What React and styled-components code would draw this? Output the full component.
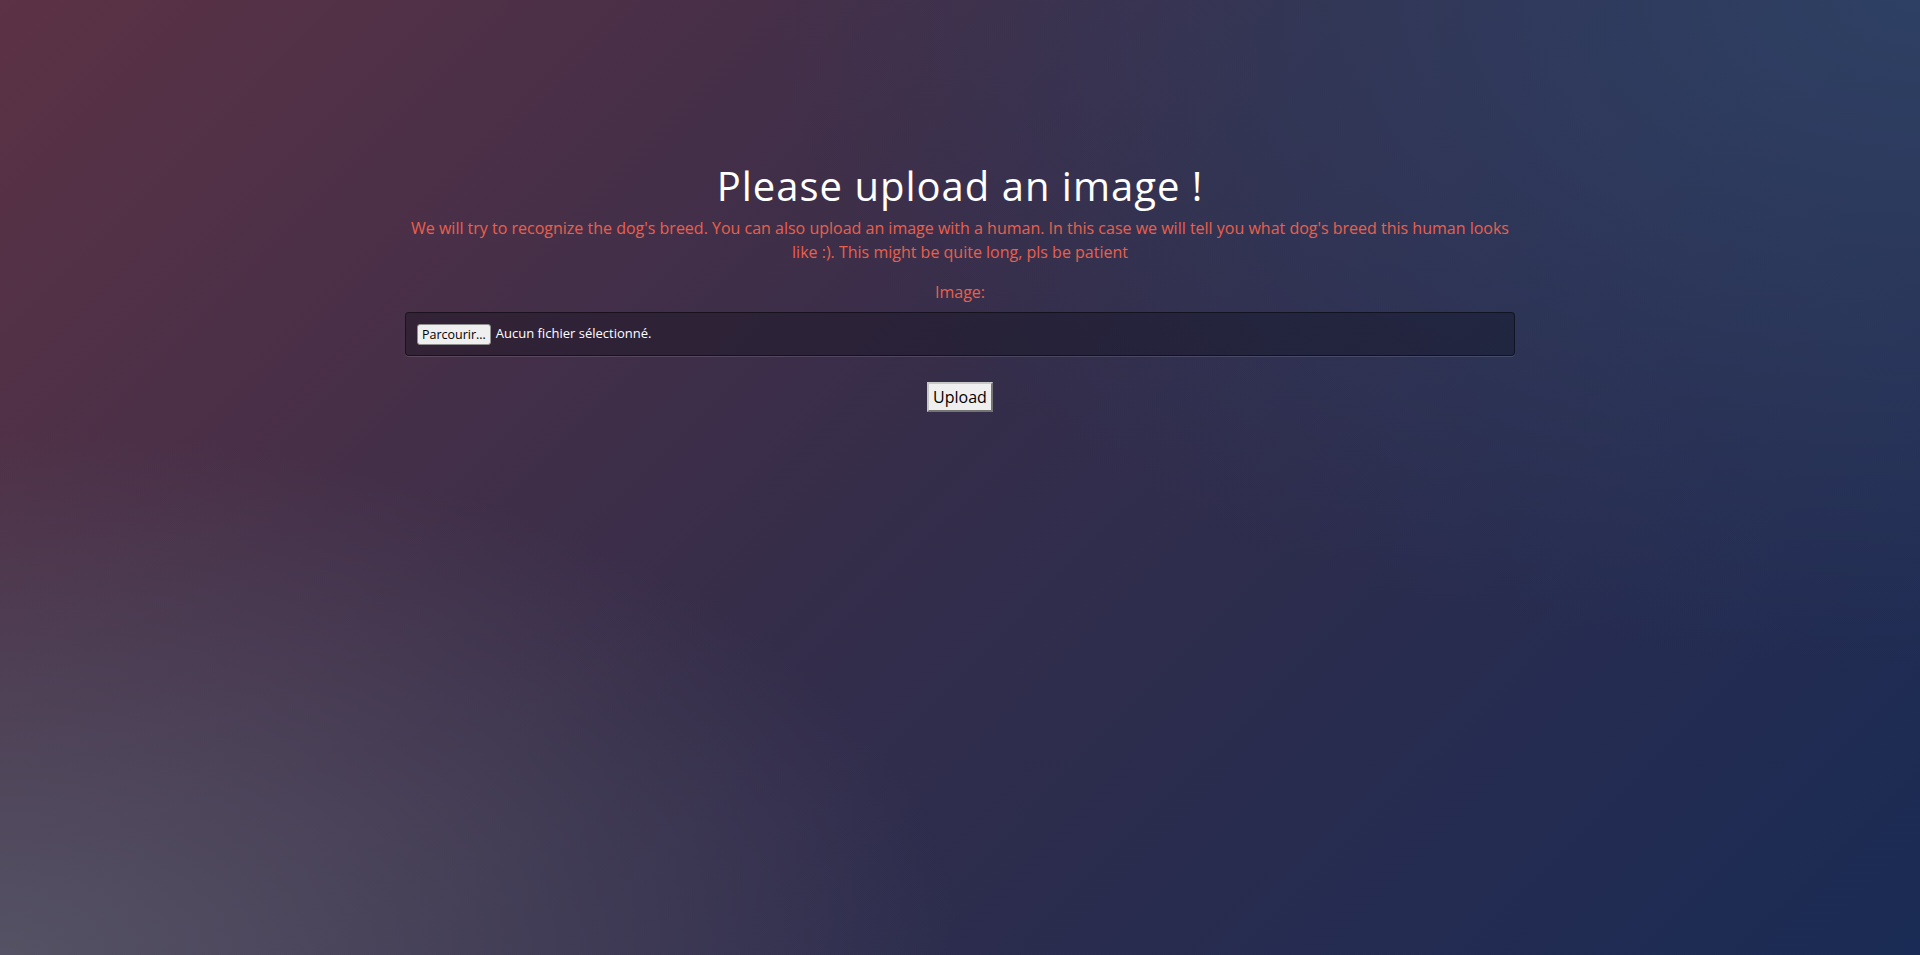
import React from 'react';
import styled, { createGlobalStyle } from 'styled-components';

const GlobalStyle = createGlobalStyle`
    html, body {
        margin: 0;
        padding: 0;
        height: 100%;
    }
    body {
        font-family: "Open Sans", "Noto Sans", sans-serif;
        font-size: 16px;
        line-height: 1.5;
        color: #fff;
    }
    #root {
        min-height: 100%;
    }
    `;

const Page = styled.div`
    min-height: 955px;
    box-sizing: border-box;
    padding-top: 162px;
    background:
        radial-gradient(ellipse 50% 55% at 0% 100%, rgba(86, 84, 102, 0.95) 0%, rgba(86, 84, 102, 0) 100%),
        radial-gradient(ellipse 60% 70% at 100% 0%, rgba(46, 66, 102, 0.9) 0%, rgba(46, 66, 102, 0) 100%),
        linear-gradient(135deg, #5c3245 0%, #352d4a 48%, #1a2b55 100%);
    `;

const Container = styled.div`
    width: 1110px;
    margin: 0 auto;
    text-align: center;
    `;

const Title = styled.h1`
    margin: 0 0 6px;
    font-size: 40px;
    font-weight: 400;
    line-height: 1.2;
    letter-spacing: 1px;
    color: #ffffff;
    `;

const Lead = styled.p`
    margin: 0 0 16px;
    color: #e9604c;
    `;

const Form = styled.form`
    display: flex;
    flex-direction: column;
    align-items: center;
    `;

const FormGroup = styled.div`
    width: 100%;
    margin-bottom: 26px;
    `;

const Label = styled.label`
    display: block;
    margin-bottom: 8px;
    color: #e9604c;
    `;

const FileBox = styled.div`
    display: flex;
    align-items: center;
    gap: 5px;
    box-sizing: border-box;
    height: 44px;
    padding: 0 11px;
    background: rgba(10, 10, 20, 0.32);
    border: 1px solid rgba(0, 0, 0, 0.45);
    border-radius: 4px;
    box-shadow: 0 1px 0 rgba(255, 255, 255, 0.12);
    `;

const BrowseButton = styled.button`
    height: 21px;
    padding: 0 4px;
    font-family: "Open Sans", "Noto Sans", sans-serif;
    font-size: 12.5px;
    line-height: 19px;
    color: #000;
    background: #efefef;
    border: 1px solid #8f8f8f;
    border-radius: 3px;
    `;

const FileName = styled.span`
    font-size: 13px;
    color: #fff;
    `;

const SubmitButton = styled.button`
    padding: 1px 4px;
    font-family: "Open Sans", "Noto Sans", sans-serif;
    font-size: 16px;
    line-height: 24px;
    color: #000;
    background: #efefef;
    border: 2px outset #c8c8c8;
    border-radius: 0;
    `;

export default function App() {
    return (
        <>
            <GlobalStyle />
            <Page>
                <Container>
                    <Title>Please upload an image !</Title>
                    <Lead>
                        We will try to recognize the dog's breed. You can also upload an image with a human. In this case we will tell you what dog's breed this human looks like :). This might be quite long, pls be patient
                    </Lead>
                    <Form onSubmit={(e) => e.preventDefault()}>
                        <FormGroup>
                            <Label>Image:</Label>
                            <FileBox>
                                <BrowseButton type="button">Parcourir…</BrowseButton>
                                <FileName>Aucun fichier sélectionné.</FileName>
                            </FileBox>
                        </FormGroup>
                        <SubmitButton type="submit">Upload</SubmitButton>
                    </Form>
                </Container>
            </Page>
        </>
    );
}
